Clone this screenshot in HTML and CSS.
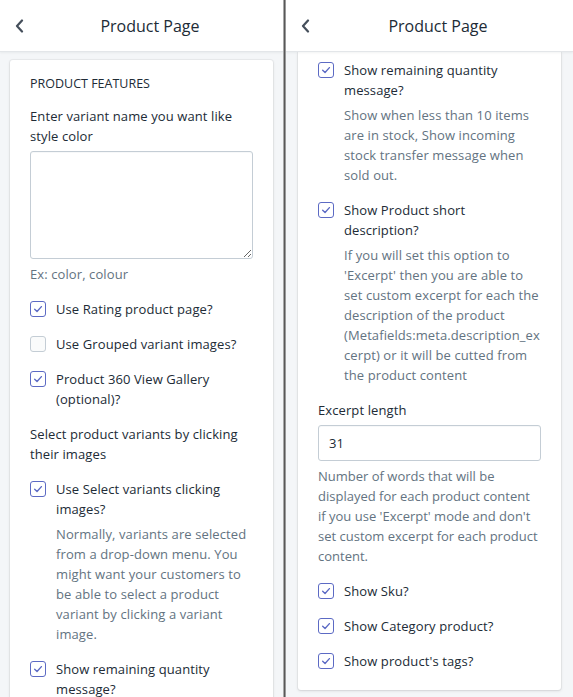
FILE: index.html
```html
<!DOCTYPE html>
<html lang="en">
<head>
<meta charset="utf-8">
<title>Product Page</title>
<link rel="stylesheet" href="styles.css">
</head>
<body>
<div class="app">
  <section class="panel">
    <header class="topbar">
      <span class="back"><svg width="9" height="14" viewBox="0 0 9 14"><path d="M7 1.5 L2 7 L7 12.5" fill="none" stroke="#454f5b" stroke-width="2.2" stroke-linecap="round" stroke-linejoin="round"/></svg></span>
      <h1 class="title">Product Page</h1>
    </header>
    <div class="scroll">
      <div class="card">
        <h2 class="subheading">Product features</h2>
        <div class="field">
          <label class="label">Enter variant name you want like style color</label>
          <textarea class="textarea"></textarea>
          <p class="help help-flat">Ex: color, colour</p>
        </div>
        <div class="check">
          <span class="box on"><svg viewBox="0 0 16 16"><path d="M4.2 8.4 L6.9 10.9 L11.9 5.3" fill="none" stroke="#5c6ac4" stroke-width="1.6" stroke-linecap="round" stroke-linejoin="round"/></svg></span>
          <div class="check-text"><span>Use Rating product page?</span></div>
        </div>
        <div class="check">
          <span class="box"></span>
          <div class="check-text"><span>Use Grouped variant images?</span></div>
        </div>
        <div class="check">
          <span class="box on"><svg viewBox="0 0 16 16"><path d="M4.2 8.4 L6.9 10.9 L11.9 5.3" fill="none" stroke="#5c6ac4" stroke-width="1.6" stroke-linecap="round" stroke-linejoin="round"/></svg></span>
          <div class="check-text"><span>Product 360 View Gallery (optional)?</span></div>
        </div>
        <p class="para">Select product variants by clicking their images</p>
        <div class="check">
          <span class="box on"><svg viewBox="0 0 16 16"><path d="M4.2 8.4 L6.9 10.9 L11.9 5.3" fill="none" stroke="#5c6ac4" stroke-width="1.6" stroke-linecap="round" stroke-linejoin="round"/></svg></span>
          <div class="check-text">
            <span>Use Select variants clicking images?</span>
            <p class="help">Normally, variants are selected from a drop-down menu. You might want your customers to be able to select a product variant by clicking a variant image.</p>
          </div>
        </div>
        <div class="check">
          <span class="box on"><svg viewBox="0 0 16 16"><path d="M4.2 8.4 L6.9 10.9 L11.9 5.3" fill="none" stroke="#5c6ac4" stroke-width="1.6" stroke-linecap="round" stroke-linejoin="round"/></svg></span>
          <div class="check-text">
            <span>Show remaining quantity message?</span>
            <p class="help">Show when less than 10 items are in stock, Show incoming stock transfer message when sold out.</p>
          </div>
        </div>
      </div>
    </div>
  </section>

  <div class="divider"></div>

  <section class="panel panel-right">
    <header class="topbar">
      <span class="back"><svg width="9" height="14" viewBox="0 0 9 14"><path d="M7 1.5 L2 7 L7 12.5" fill="none" stroke="#454f5b" stroke-width="2.2" stroke-linecap="round" stroke-linejoin="round"/></svg></span>
      <h1 class="title">Product Page</h1>
    </header>
    <div class="scroll">
      <div class="card card-scrolled">
        <div class="check">
          <span class="box on"><svg viewBox="0 0 16 16"><path d="M4.2 8.4 L6.9 10.9 L11.9 5.3" fill="none" stroke="#5c6ac4" stroke-width="1.6" stroke-linecap="round" stroke-linejoin="round"/></svg></span>
          <div class="check-text">
            <span>Show remaining quantity message?</span>
            <p class="help">Show when less than 10 items are in stock, Show incoming stock transfer message when sold out.</p>
          </div>
        </div>
        <div class="check">
          <span class="box on"><svg viewBox="0 0 16 16"><path d="M4.2 8.4 L6.9 10.9 L11.9 5.3" fill="none" stroke="#5c6ac4" stroke-width="1.6" stroke-linecap="round" stroke-linejoin="round"/></svg></span>
          <div class="check-text">
            <span>Show Product short description?</span>
            <p class="help">If you will set this option to 'Excerpt' then you are able to set custom excerpt for each the description of the product (Metafields:meta.description_ex&#8203;cerpt) or it will be cutted from the product content</p>
          </div>
        </div>
        <div class="field">
          <label class="label">Excerpt length</label>
          <input class="input" type="text" value="31">
          <p class="help help-tight">Number of words that will be displayed for each product content<br>if you use 'Excerpt' mode and don't set custom excerpt for each product content.</p>
        </div>
        <div class="check">
          <span class="box on"><svg viewBox="0 0 16 16"><path d="M4.2 8.4 L6.9 10.9 L11.9 5.3" fill="none" stroke="#5c6ac4" stroke-width="1.6" stroke-linecap="round" stroke-linejoin="round"/></svg></span>
          <div class="check-text"><span>Show Sku?</span></div>
        </div>
        <div class="check">
          <span class="box on"><svg viewBox="0 0 16 16"><path d="M4.2 8.4 L6.9 10.9 L11.9 5.3" fill="none" stroke="#5c6ac4" stroke-width="1.6" stroke-linecap="round" stroke-linejoin="round"/></svg></span>
          <div class="check-text"><span>Show Category product?</span></div>
        </div>
        <div class="check">
          <span class="box on"><svg viewBox="0 0 16 16"><path d="M4.2 8.4 L6.9 10.9 L11.9 5.3" fill="none" stroke="#5c6ac4" stroke-width="1.6" stroke-linecap="round" stroke-linejoin="round"/></svg></span>
          <div class="check-text"><span>Show product's tags?</span></div>
        </div>
      </div>
    </div>
  </section>
</div>
</body>
</html>
```

FILE: styles.css
```css
* { box-sizing: border-box; }
html, body { margin: 0; padding: 0; }
body {
  font-family: "Open Sans", "Noto Sans", sans-serif;
  font-size: 13px;
  line-height: 20px;
  letter-spacing: 0.1px;
  color: #212b36;
  background: #f4f6f8;
}
.app {
  display: flex;
  height: 697px;
  overflow: hidden;
}
.panel {
  width: 283px;
  flex: none;
  display: flex;
  flex-direction: column;
  background: #f4f6f8;
  overflow: hidden;
}
.panel-right {
  flex: 1;
  width: auto;
}
.divider {
  width: 3px;
  flex: none;
  background: linear-gradient(to right, #a8a8a8 0, #a8a8a8 1px, #585858 1px, #585858 2px, #9a9a9a 2px);
}
.topbar {
  height: 52px;
  flex: none;
  display: grid;
  grid-template-columns: 34px 1fr;
  align-items: center;
  background: #fff;
  border-bottom: 1px solid #e3e6e9;
  box-shadow: 0 1px 2px rgba(33, 43, 54, 0.06);
  position: relative;
  z-index: 1;
}
.back {
  display: flex;
  align-items: center;
  padding-left: 15px;
  height: 14px;
}
.back svg { display: block; }
.title {
  margin: 0;
  padding-right: 17px;
  text-align: center;
  font-size: 16px;
  font-weight: 400;
  line-height: 20px;
  letter-spacing: 0;
  color: #212b36;
}
.scroll {
  flex: 1;
  overflow: hidden;
  padding-top: 8px;
}
.card {
  width: 263px;
  margin: 0 auto;
  background: #fff;
  border-radius: 3px;
  box-shadow: 0 0 0 1px rgba(63, 63, 68, 0.05), 0 1px 3px 0 rgba(63, 63, 68, 0.15);
  padding: 16px 20px 19px;
  display: flex;
  flex-direction: column;
  gap: 15px;
}
.panel-right .scroll { padding-top: 0; }
.card-scrolled {
  border-radius: 0 0 3px 3px;
  padding-top: 8px;
}
.subheading {
  margin: 0 0 -1px;
  font-size: 12.5px;
  font-weight: 400;
  line-height: 16px;
  text-transform: uppercase;
  letter-spacing: 0;
  color: #212b36;
}
.field {
  display: flex;
  flex-direction: column;
}
.label { display: block; margin-bottom: 5px; }
.textarea {
  display: block;
  width: 100%;
  height: 108px;
  border: 1px solid #c4cdd5;
  border-radius: 3px;
  background: #fff;
  box-shadow: inset 0 1px 0 0 rgba(99, 115, 129, 0.05);
  font: inherit;
  margin: 0;
}
.input {
  display: block;
  width: 100%;
  height: 36px;
  border: 1px solid #c4cdd5;
  border-radius: 3px;
  background: #fff;
  box-shadow: inset 0 1px 0 0 rgba(99, 115, 129, 0.05);
  font: inherit;
  color: #212b36;
  padding: 0 10px;
  margin: 0;
}
.help {
  margin: 5px 0 0;
  color: #637381;
}
.help-tight { letter-spacing: 0; }
.para { margin: 0; }
.check {
  display: flex;
  align-items: flex-start;
  gap: 10px;
}
.box {
  flex: none;
  width: 16px;
  height: 16px;
  margin-top: 2px;
  border: 1px solid #c4cdd5;
  border-radius: 3px;
  background: #fafbfb;
  display: flex;
}
.box.on {
  border-color: #5c6ac4;
  background: #fff;
}
.box svg { width: 14px; height: 14px; display: block; }
.check-text { flex: 1; min-width: 0; }
```
